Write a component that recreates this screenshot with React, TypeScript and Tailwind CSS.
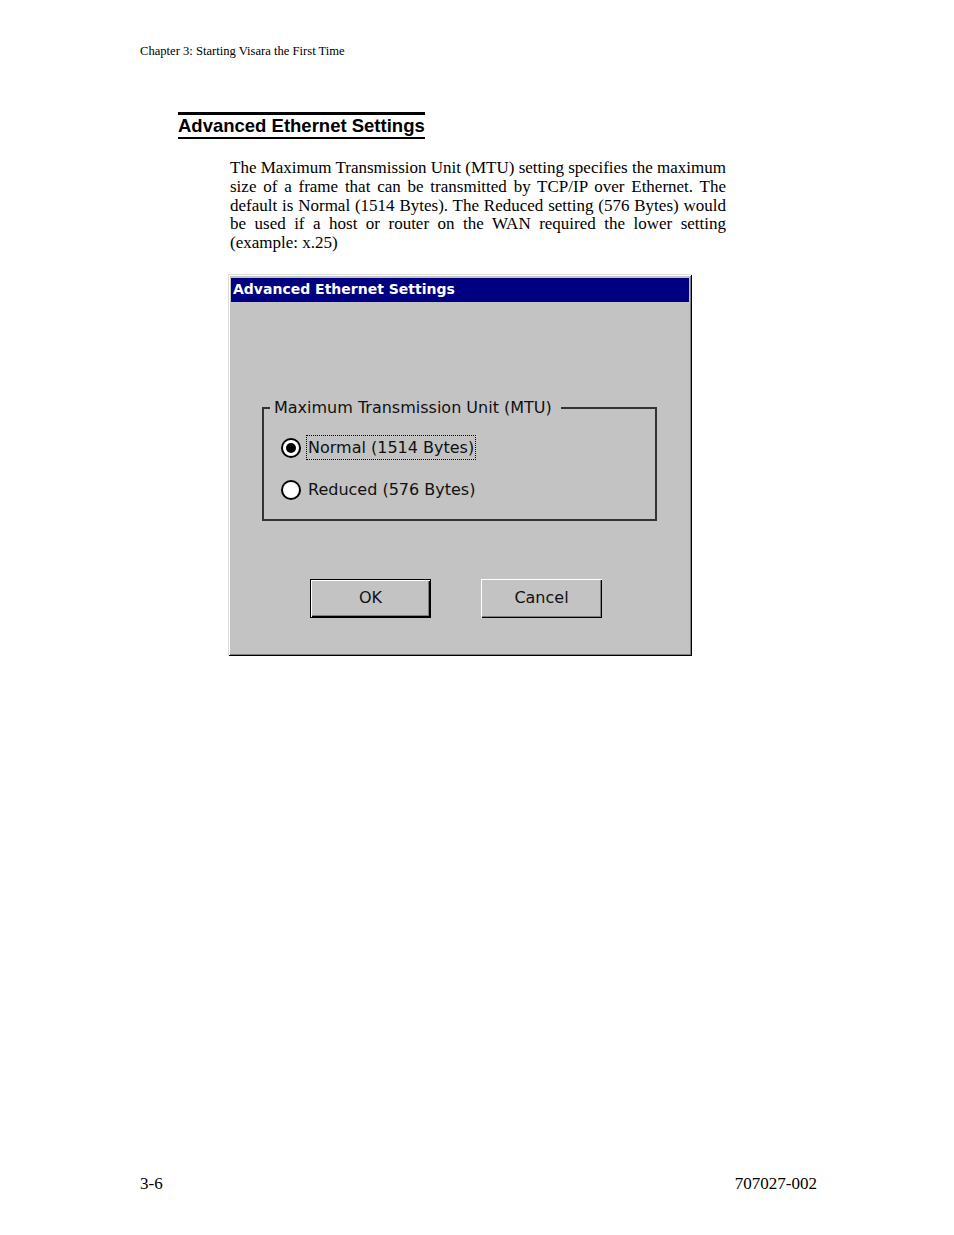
import React from "react";

const SERIF = "font-['Liberation_Serif','Times_New_Roman',serif]";
const UI = "font-['DejaVu_Sans',Verdana,sans-serif]";

const paragraph = [
  "The Maximum Transmission Unit (MTU) setting specifies the maximum",
  "size of a frame that can be transmitted by TCP/IP over Ethernet. The",
  "default is Normal (1514 Bytes). The Reduced setting (576 Bytes) would",
  "be used if a host or router on the WAN required the lower setting",
  "(example: x.25)",
];

// Win-style round radio button
const Radio = ({ checked }: { checked?: boolean }) => (
  <span className="flex h-[20px] w-[20px] shrink-0 items-center justify-center rounded-full bg-black">
    <span className="flex h-[16px] w-[16px] items-center justify-center rounded-full bg-white">
      {checked && <span className="h-[10px] w-[10px] rounded-full bg-black" />}
    </span>
  </span>
);

const Button = ({ label, isDefault }: { label: string; isDefault?: boolean }) => (
  <button
    className={
      "flex h-[39px] w-[121px] items-center justify-center bg-[#c3c3c3] text-[16px] text-[#111] " +
      (isDefault
        ? "border border-black shadow-[inset_1px_1px_0_#fff,inset_-1px_-1px_0_#000,inset_-2px_-2px_0_#808080]"
        : "shadow-[inset_1px_1px_0_#fff,inset_-1px_-1px_0_#000,inset_-2px_-2px_0_#808080]")
    }
  >
    {label}
  </button>
);

export default function App() {
  return (
    <div className="flex h-[1235px] w-[954px] flex-col bg-white text-black">
      {/* Running header */}
      <div className={`${SERIF} pl-[140px] pt-[44px] text-[12.6px] leading-[14px]`}>
        Chapter 3: Starting Visara the First Time
      </div>

      {/* Section heading */}
      <div className="ml-[178px] mt-[54px]">
        <h2 className="inline-block border-t-[3px] border-b-[2px] border-black font-['Liberation_Sans',Arial,sans-serif] text-[18.5px] font-bold leading-[22px]">
          Advanced Ethernet Settings
        </h2>
      </div>

      {/* Body text */}
      <div className={`${SERIF} ml-[230px] mt-[20px] w-[496px] text-[17px] leading-[18.75px]`}>
        {paragraph.map((line, i) => (
          <div
            key={i}
            className={
              i < paragraph.length - 1
                ? "whitespace-nowrap text-justify [text-align-last:justify]"
                : "whitespace-nowrap"
            }
          >
            {line}
          </div>
        ))}
      </div>

      {/* Dialog screenshot */}
      <div
        className={`${UI} ml-[228px] mt-[21px] w-[464px] bg-[#c3c3c3] px-[3px] pb-[3px] pt-[4px] shadow-[inset_1px_1px_0_#dfdfdf,inset_-1px_-1px_0_#000,inset_2px_2px_0_#fff,inset_-2px_-2px_0_#808080]`}
      >
        <div className="flex h-[24px] items-center bg-[#000080] pl-[2px] text-[14px] font-bold text-white">
          Advanced Ethernet Settings
        </div>

        <div className="flex flex-col pb-[35px]">
          <fieldset className="ml-[31px] mt-[96px] w-[395px] border-2 border-[#333]">
            <legend className="ml-[6px] pl-[4px] pr-[9px] text-[16px] leading-[20px] text-[#111]">
              Maximum Transmission Unit (MTU)
            </legend>
            <div className="flex flex-col gap-[16px] pb-[16px] pl-[17px] pt-[17px] text-[16px] text-[#111]">
              <label className="flex h-[26px] items-center">
                <Radio checked />
                <span className="ml-[5px] border border-dotted border-black px-[1px] leading-[23px]">
                  Normal (1514 Bytes)
                </span>
              </label>
              <label className="flex h-[26px] items-center">
                <Radio />
                <span className="ml-[7px] leading-[23px]">Reduced (576 Bytes)</span>
              </label>
            </div>
          </fieldset>

          <div className="ml-[79px] mt-[58px] flex gap-[50px]">
            <Button label="OK" isDefault />
            <Button label="Cancel" />
          </div>
        </div>
      </div>

      {/* Running footer */}
      <div className={`${SERIF} mt-auto flex justify-between pb-[42px] pl-[140px] pr-[137px] text-[17px] leading-[18px]`}>
        <span>3-6</span>
        <span>707027-002</span>
      </div>
    </div>
  );
}
